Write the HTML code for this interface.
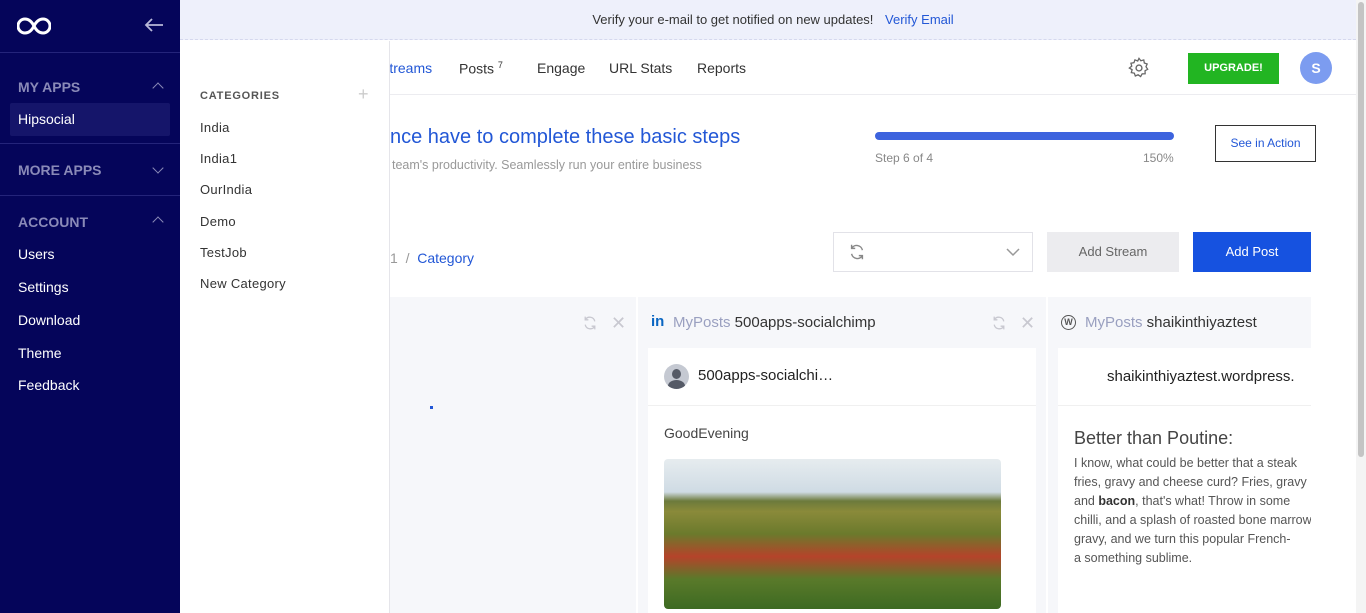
<!DOCTYPE html>
<html><head><style>
*{box-sizing:border-box;margin:0;padding:0}
body{width:1366px;height:613px;overflow:hidden;font-family:"Liberation Sans",sans-serif;background:#fff;position:relative}
.sb{position:absolute;left:0;top:0;width:180px;height:613px;background:#05055a;color:#fff}
.sb .hd{height:53px;border-bottom:1px solid #24247a;position:relative}
.sec{position:absolute;left:18px;font-size:14px;font-weight:bold;color:#8a8ab8}
.chev{position:absolute;right:18px;width:8px;height:8px;border-left:1.5px solid #8a8ab8;border-top:1.5px solid #8a8ab8}
.it{position:absolute;left:18px;font-size:14px;color:#fff}
.line{position:absolute;left:0;width:180px;height:1px;background:#24247a}
.top{position:absolute;left:180px;top:0;width:1186px;height:40px;background:#eef0fb;border-bottom:1px dashed #d5d8ee;text-align:center;font-size:13px;color:#333;line-height:40px}
.top a{color:#2257d6;margin-left:8px}
.main{position:absolute;left:180px;top:41px;width:1176px;height:572px}
.cat{position:absolute;left:180px;top:41px;width:210px;height:572px;background:#fff;border-right:1px solid #e5e5ea;z-index:3}
.cat div{position:absolute;left:20px;font-size:13px;color:#333;letter-spacing:.3px}
.nav span{position:absolute;top:19px;font-size:14px;color:#333}
.t{position:absolute}
.col{position:absolute;top:256px;height:316px;background:#f6f7fa}
.card{position:absolute;background:#fff}
.scroll{position:absolute;right:0;top:0;width:10px;height:613px;background:#f4f4f4}
.scroll div{position:absolute;left:2px;top:2px;width:6px;height:455px;background:#c4c4c4;border-radius:3px}
</style></head><body>
<div class="sb">
 <div class="hd">
  <svg style="position:absolute;left:17px;top:17px" width="34" height="18" viewBox="0 0 34 18"><path d="M17 9C14 3 10 2 8 2A7 7 0 1 0 8 16C10 16 14 15 17 9C20 3 24 2 26 2A7 7 0 1 1 26 16C24 16 20 15 17 9Z" fill="none" stroke="#fff" stroke-width="3"/></svg>
  <svg style="position:absolute;left:144px;top:17px" width="20" height="16" viewBox="0 0 20 16"><path d="M19 8H2M8 2L2 8L8 14" fill="none" stroke="#b8b8d8" stroke-width="1.8"/></svg>
 </div>
 <div class="sec" style="top:79px">MY APPS</div><div class="chev" style="top:84px;transform:rotate(45deg)"></div>
 <div style="position:absolute;left:10px;top:103px;width:160px;height:33px;background:#15156a;border-radius:2px"></div>
 <div class="it" style="top:111px">Hipsocial</div>
 <div class="line" style="top:143px"></div>
 <div class="sec" style="top:162px">MORE APPS</div><div class="chev" style="top:164px;transform:rotate(225deg)"></div>
 <div class="line" style="top:195px"></div>
 <div class="sec" style="top:214px">ACCOUNT</div><div class="chev" style="top:218px;transform:rotate(45deg)"></div>
 <div class="it" style="top:246px">Users</div>
 <div class="it" style="top:279px">Settings</div>
 <div class="it" style="top:312px">Download</div>
 <div class="it" style="top:345px">Theme</div>
 <div class="it" style="top:377px">Feedback</div>
</div>
<div class="top">Verify your e-mail to get notified on new updates! <a>Verify Email</a></div>
<div class="cat">
 <div style="top:49px;font-size:11px;font-weight:bold;color:#555;letter-spacing:.8px">CATEGORIES</div>
 <div style="top:43px;left:178px;font-size:18px;color:#ccc">+</div>
 <div style="top:79px">India</div>
 <div style="top:110px">India1</div>
 <div style="top:141px">OurIndia</div>
 <div style="top:173px">Demo</div>
 <div style="top:204px">TestJob</div>
 <div style="top:235px">New Category</div>
</div>
<div class="main">
 <div class="nav" style="position:absolute;left:0;top:0;width:1176px;height:54px;border-bottom:1px solid #ececf0">
  <span style="left:200px;color:#2257d6">Streams</span>
  <span style="left:279px">Posts <sup style="font-size:9px">7</sup></span>
  <span style="left:357px">Engage</span>
  <span style="left:429px">URL Stats</span>
  <span style="left:517px">Reports</span>
  <svg style="position:absolute;left:948px;top:16px" width="22" height="22" viewBox="0 0 24 24"><circle cx="12" cy="12" r="3.2" fill="none" stroke="#666" stroke-width="1.5"/><path d="M12 1.5l2 2.6 3.2-.9.6 3.3 3.1 1.1-1.3 3 1.9 2.8-2.9 1.6.1 3.3-3.3.1-1.6 2.9-2.8-1.9-3 1.3-1.1-3.1-3.3-.6.9-3.2L1.5 12l2.6-2-.9-3.2 3.3-.6 1.1-3.1 3 1.3z" fill="none" stroke="#666" stroke-width="1.4"/></svg>
  <div style="position:absolute;left:1008px;top:12px;width:91px;height:31px;background:#22b522;color:#fff;font-size:11px;font-weight:bold;text-align:center;line-height:31px">UPGRADE!</div>
  <div style="position:absolute;left:1120px;top:11px;width:32px;height:32px;border-radius:50%;background:#7c9cf0;color:#fff;font-weight:bold;font-size:14px;text-align:center;line-height:32px">S</div>
 </div>
 <div class="t" style="left:210px;top:85px;font-size:20px;color:#2257d6;white-space:nowrap">nce have to complete these basic steps</div>
 <div class="t" style="left:212px;top:117px;font-size:12.5px;color:#999;white-space:nowrap">team's productivity. Seamlessly run your entire business</div>
 <div class="t" style="left:695px;top:91px;width:299px;height:8px;border-radius:4px;background:#3d63de"></div>
 <div class="t" style="left:695px;top:110px;font-size:12px;color:#888">Step 6 of 4</div>
 <div class="t" style="left:963px;top:110px;font-size:12px;color:#888">150%</div>
 <div class="t" style="left:1035px;top:84px;width:101px;height:37px;border:1px solid #333;font-size:12px;color:#2257d6;text-align:center;line-height:35px">See in Action</div>
 <div class="t" style="left:210px;top:209px;font-size:14px;color:#999">1 &nbsp;/ &nbsp;<span style="color:#2257d6">Category</span></div>
 <div class="t" style="left:653px;top:191px;width:200px;height:40px;border:1px solid #e2e2e8;background:#fff">
  <svg style="position:absolute;left:14px;top:10px" width="18" height="18" viewBox="0 0 20 20"><path d="M16 8A6.5 6.5 0 0 0 4 6M4 12a6.5 6.5 0 0 0 12 2M4 2v4h4M16 18v-4h-4" fill="none" stroke="#888" stroke-width="1.6"/></svg>
  <svg style="position:absolute;left:172px;top:15px" width="14" height="9" viewBox="0 0 14 9"><path d="M1 1l6 6 6-6" fill="none" stroke="#999" stroke-width="1.5"/></svg>
 </div>
 <div class="t" style="left:867px;top:191px;width:132px;height:40px;background:#ececef;color:#666;font-size:13px;text-align:center;line-height:40px">Add Stream</div>
 <div class="t" style="left:1013px;top:191px;width:118px;height:40px;background:#1652e0;color:#fff;font-size:13px;text-align:center;line-height:40px">Add Post</div>
</div>
<div class="col" style="left:390px;width:246px;top:297px;height:316px">
 <svg style="position:absolute;left:192px;top:18px" width="16" height="16" viewBox="0 0 20 20"><path d="M16 8A6.5 6.5 0 0 0 4 6M4 12a6.5 6.5 0 0 0 12 2M4 2v4h4M16 18v-4h-4" fill="none" stroke="#c8c8d0" stroke-width="1.6"/></svg>
 <div style="position:absolute;left:221px;top:16px;font-size:18px;color:#c8c8d0">✕</div>
 <div style="position:absolute;left:40px;top:109px;width:3px;height:3px;background:#2257d6"></div>
</div>
<div class="col" style="left:638px;width:408px;top:297px;height:316px">
 <div style="position:absolute;left:13px;top:16px;font-size:15px;font-weight:bold;color:#0a66c2">in</div>
 <div style="position:absolute;left:35px;top:17px;font-size:15px;color:#333"><span style="color:#9aa0c0">MyPosts</span> 500apps-socialchimp</div>
 <svg style="position:absolute;left:353px;top:18px" width="16" height="16" viewBox="0 0 20 20"><path d="M16 8A6.5 6.5 0 0 0 4 6M4 12a6.5 6.5 0 0 0 12 2M4 2v4h4M16 18v-4h-4" fill="none" stroke="#c8c8d0" stroke-width="1.6"/></svg>
 <div style="position:absolute;left:382px;top:16px;font-size:18px;color:#c8c8d0">✕</div>
 <div class="card" style="left:10px;top:51px;width:388px;height:265px">
  <div style="height:58px;border-bottom:1px solid #f0f0f0;position:relative">
   <div style="position:absolute;left:16px;top:16px;width:25px;height:25px;border-radius:50%;background:#c5c9d2;overflow:hidden"><div style="position:absolute;left:8px;top:5px;width:9px;height:10px;border-radius:50%;background:#555a66"></div><div style="position:absolute;left:4px;top:16px;width:17px;height:12px;border-radius:50%;background:#555a66"></div></div>
   <div style="position:absolute;left:50px;top:19px;font-size:15px;color:#222">500apps-socialchi…</div>
  </div>
  <div style="position:absolute;left:16px;top:77px;font-size:14px;color:#444">GoodEvening</div>
  <div style="position:absolute;left:16px;top:111px;width:337px;height:150px;border-radius:4px;background:linear-gradient(180deg,#e6ecef 0%,#cfdbe4 22%,#6c7a3c 28%,#8a8a3a 35%,#6b7a2c 50%,#b5432a 65%,#5a7a2a 80%,#3d6a22 100%)"></div>
 </div>
</div>
<div class="col" style="left:1048px;width:263px;top:297px;height:316px">
 <div style="position:absolute;left:13px;top:18px;width:15px;height:15px;border-radius:50%;border:1.5px solid #555;font-size:9px;font-weight:bold;color:#555;text-align:center;line-height:12px">W</div>
 <div style="position:absolute;left:37px;top:17px;font-size:15px;color:#333"><span style="color:#9aa0c0">MyPosts</span> shaikinthiyaztest</div>
 <div class="card" style="left:10px;top:51px;width:253px;height:265px;overflow:hidden">
  <div style="height:58px;border-bottom:1px solid #f0f0f0;position:relative"><div style="position:absolute;left:49px;top:20px;font-size:15px;color:#222;white-space:nowrap">shaikinthiyaztest.wordpress.</div></div>
  <div style="position:absolute;left:16px;top:80px;font-size:18px;color:#444;white-space:nowrap">Better than Poutine:</div>
  <div style="position:absolute;left:16px;top:106px;width:300px;font-size:12.5px;line-height:19px;color:#555">I know, what could be better that a steak<br>fries, gravy and cheese curd? Fries, gravy<br>and <b style="color:#333">bacon</b>, that's what! Throw in some<br>chilli, and a splash of roasted bone marrow<br>gravy, and we turn this popular French-<br>a something sublime.</div>
 </div>
</div>
<div class="scroll"><div></div></div>
</body></html>
